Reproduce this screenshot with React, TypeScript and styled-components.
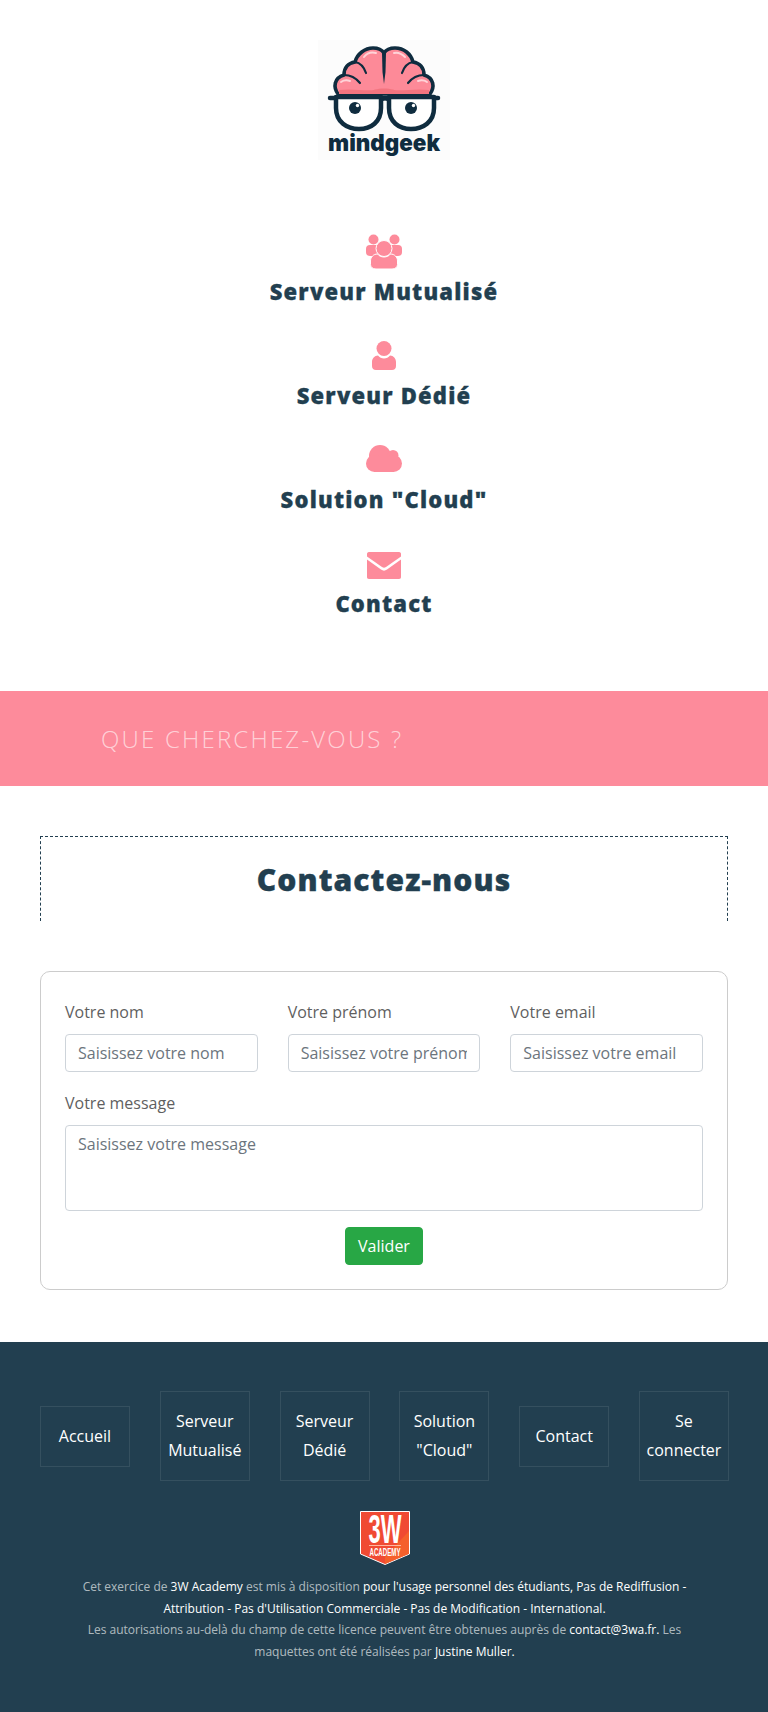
import React from 'react';
import styled, { createGlobalStyle } from 'styled-components';

const GlobalStyle = createGlobalStyle`
  html, body {
    margin: 0;
    padding: 0;
    background: #fff;
    font-family: "Open Sans", "Liberation Sans", sans-serif;
  }
  * {
    box-sizing: border-box;
  }
`;

const Page = styled.div`
  width: 768px;
`;

const Header = styled.header`
  display: flex;
  flex-direction: column;
  align-items: center;
  padding: 40px 0 71px;
`;

const LogoBox = styled.a`
  display: block;
  width: 132px;
  height: 120px;
  background: #fcfcfc;
`;

const LogoSvg = styled.svg`
  display: block;
  width: 132px;
  height: 120px;
`;

const Nav = styled.nav`
  display: flex;
  flex-direction: column;
  align-items: center;
  gap: 28px;
  margin-top: 72px;
`;

const NavItem = styled.a`
  display: flex;
  flex-direction: column;
  align-items: center;
`;

const NavIcon = styled.svg`
  display: block;
  width: 40px;
  height: 40px;
  fill: #fd8b9b;
`;

const NavTitle = styled.span`
  margin-top: 3px;
  font-size: 22px;
  line-height: 33px;
  font-weight: 800;
  letter-spacing: 1.2px;
  -webkit-text-stroke: 0.3px #223f50;
  color: #223f50;
`;

const SearchBand = styled.section`
  display: flex;
  align-items: center;
  height: 95px;
  padding-left: 101px;
  background: #fd8b9b;
`;

const SearchText = styled.span`
  font-size: 24px;
  font-weight: 300;
  letter-spacing: 2.2px;
  text-transform: uppercase;
  color: rgba(255, 255, 255, 0.62);
`;

const Main = styled.main`
  padding: 50px 40px 52px;
`;

const TitleBox = styled.div`
  display: flex;
  justify-content: center;
  align-items: center;
  height: 85px;
  border: 1px dashed #223f50;
  border-bottom: none;
`;

const Title = styled.h1`
  margin: 0;
  font-size: 30px;
  font-weight: 800;
  letter-spacing: 1.1px;
  -webkit-text-stroke: 0.4px #223f50;
  color: #223f50;
`;

const FormCard = styled.form`
  margin-top: 50px;
  padding: 28px 24px 24px;
  border: 1px solid #ccc;
  border-radius: 10px;
`;

const FieldRow = styled.div`
  display: grid;
  grid-template-columns: repeat(3, 1fr);
  gap: 30px;
`;

const Field = styled.label`
  display: block;
  min-width: 0;
`;

const FieldLabel = styled.span`
  display: block;
  margin-bottom: 10px;
  font-size: 16px;
  line-height: 24px;
  color: #5f5f5f;
`;

const TextInput = styled.input`
  display: block;
  width: 100%;
  height: 38px;
  padding: 6px 12px;
  border: 1px solid #ced4da;
  border-radius: 4px;
  background: #fff;
  font-family: inherit;
  font-size: 16px;
  color: #495057;

  &::placeholder {
    color: #6c757d;
    opacity: 1;
  }
`;

const MessageField = styled(Field)`
  margin-top: 19px;
`;

const TextArea = styled.textarea`
  display: block;
  width: 100%;
  height: 86px;
  padding: 6px 12px;
  border: 1px solid #ced4da;
  border-radius: 4px;
  background: #fff;
  font-family: inherit;
  font-size: 16px;
  line-height: 24px;
  resize: none;

  &::placeholder {
    color: #6c757d;
    opacity: 1;
  }
`;

const SubmitRow = styled.div`
  display: flex;
  justify-content: center;
  margin-top: 16px;
`;

const SubmitButton = styled.button`
  height: 38px;
  width: 78px;
  padding: 0;
  border: 1px solid #28a745;
  border-radius: 4px;
  background: #28a745;
  font-family: inherit;
  font-size: 16px;
  color: #fff;
  cursor: pointer;
`;

const Footer = styled.footer`
  height: 370px;
  padding: 49px 39px 0 40px;
  background: #223f50;
`;

const FooterNav = styled.nav`
  display: flex;
  justify-content: space-between;
  align-items: center;
`;

const FooterLink = styled.a`
  display: block;
  width: 90px;
  padding: 15px 6px;
  border: 1px solid #35505f;
  font-size: 16px;
  line-height: 29px;
  text-align: center;
  color: #fff;
`;

const Badge = styled.svg`
  display: block;
  width: 50px;
  height: 54px;
  margin: 30px auto 11px;
`;

const Licence = styled.p`
  margin: 0 auto;
  width: 640px;
  font-size: 12px;
  line-height: 21.7px;
  text-align: center;
  color: rgba(255, 255, 255, 0.65);
`;

const Strong = styled.a`
  color: #fff;
`;

const MindgeekLogo = () => (
  <LogoSvg viewBox="0 0 132 120">
    <path
      d="M20 54C15 47 16 38 26 35C26 28 30 23 37 22C39 14 47 8 55 8C60 8 64 10 66 13C68 10 72 8 77 8C86 8 93 14 95 22C102 23 106 28 106 35C116 38 117 47 112 54Z"
      fill="#fd8a98"
      stroke="#0f2c3f"
      strokeWidth="3.6"
      strokeLinejoin="round"
    />
    <path d="M64 13H68L67.500 32L66 44L64.500 32Z" fill="#0f2c3f" />
    <path
      d="M37 22C43 23 46 27 48 33M95 22C89 23 86 27 84 33M26 35C33 35 38 38 42 43M106 35C99 35 94 38 90 43"
      fill="none"
      stroke="#0f2c3f"
      strokeWidth="2.2"
      strokeLinecap="round"
    />
    <path d="M21 50C36 48 50 52 57 49.500C62 48 70 48 75 49.500C82 52 96 48 111 50V54H21Z" fill="#f3747f" />
    <path d="M46 17C49 13 54 12 58 13M76 13C80 12 84 14 87 17M23 42C26 40 29 40 32 41M100 41C103 40 106 40 109 42" fill="none" stroke="#ffd3d8" strokeWidth="2" strokeLinecap="round" />
    <path d="M12 58H120" stroke="#0f2c3f" strokeWidth="4.500" strokeLinecap="round" />
    <path d="M18 57H63V68C63 82 53 89 41 89C29 89 18 82 18 68Z" fill="#fff" stroke="#0f2c3f" strokeWidth="4.500" strokeLinejoin="round" />
    <path d="M71 57H116V68C116 82 105 89 93 89C81 89 71 82 71 68Z" fill="#fff" stroke="#0f2c3f" strokeWidth="4.500" strokeLinejoin="round" />
    <path d="M63 60C65 58 69 58 71 60" fill="none" stroke="#0f2c3f" strokeWidth="4" />
    <circle cx="37" cy="68" r="6" fill="#0f2c3f" />
    <circle cx="93" cy="68" r="6" fill="#0f2c3f" />
    <circle cx="39.500" cy="65.500" r="1.700" fill="#fff" />
    <circle cx="95.500" cy="65.500" r="1.700" fill="#fff" />
    <text
      x="66"
      y="111"
      textAnchor="middle"
      textLength="112"
      lengthAdjust="spacingAndGlyphs"
      fontFamily="Inter, 'Open Sans', sans-serif"
      fontWeight="900"
      fontSize="23"
      fill="#0f2c3f"
    >
      mindgeek
    </text>
  </LogoSvg>
);

const UsersIcon = () => (
  <NavIcon viewBox="0 0 40 40">
    <circle cx="9.500" cy="7.500" r="5" />
    <circle cx="30.500" cy="7.500" r="5" />
    <rect x="2" y="13" width="14" height="11" rx="4" />
    <rect x="24" y="13" width="14" height="11" rx="4" />
    <circle cx="20" cy="16.500" r="8" stroke="#fff" strokeWidth="1" />
    <path d="M12 37C8.500 37 6.500 35 6.500 32.500V29C6.500 25 9.500 22 13.500 22C15 24 17.500 25 20 25C22.500 25 25 24 26.500 22C30.500 22 33.500 25 33.500 29V32.500C33.500 35 31.500 37 28 37Z" stroke="#fff" strokeWidth="1" />
  </NavIcon>
);

const UserIcon = () => (
  <NavIcon viewBox="0 -1 40 40">
    <circle cx="20" cy="11.500" r="7.500" />
    <path d="M12 33C9.500 33 8 31.500 8 29V25C8 21.500 10.500 18.500 14 18.500C15.500 20.500 17.500 21.500 20 21.500C22.500 21.500 24.500 20.500 26 18.500C29.500 18.500 32 21.500 32 25V29C32 31.500 30.500 33 28 33Z" />
  </NavIcon>
);

const CloudIcon = () => (
  <NavIcon viewBox="0 -2 40 40">
    <circle cx="16" cy="14" r="11" />
    <circle cx="29" cy="13.500" r="5.500" />
    <circle cx="10.500" cy="21.500" r="8.500" />
    <circle cx="29.500" cy="21.500" r="8.500" />
    <rect x="10" y="15" width="20" height="15" />
  </NavIcon>
);

const MailIcon = () => (
  <NavIcon viewBox="0 -3 40 40">
    <path d="M5 5H35C36.500 5 37 6 37 7V9.500L22 20C20.500 21 19.500 21 18 20L3 9.500V7C3 6 3.500 5 5 5Z" />
    <path d="M3 12.500L17 22.500C19 24 21 24 23 22.500L37 12.500V30C37 31 36.500 32 35 32H5C3.500 32 3 31 3 30Z" />
  </NavIcon>
);

const AcademyBadge = () => (
  <Badge viewBox="0 0 50 54">
    <path d="M0.500 0.500H49.500V43L25 53.500L0.500 43Z" fill="#f04a33" stroke="#fff" strokeWidth="1" />
    <path d="M49 20V42.700L25 53V46Z" fill="#f5602b" />
    <text x="25" y="32" textAnchor="middle" textLength="33" lengthAdjust="spacingAndGlyphs" fontFamily="'Liberation Sans', sans-serif" fontWeight="700" fontSize="40" fill="#fff">
      3W
    </text>
    <rect x="9" y="34" width="32" height="1" fill="#ffb7a0" />
    <text x="25" y="44.500" textAnchor="middle" textLength="31" lengthAdjust="spacingAndGlyphs" fontFamily="'Liberation Sans', sans-serif" fontWeight="700" fontSize="11" fill="#fff">
      ACADEMY
    </text>
  </Badge>
);

const navItems = [
  { label: 'Serveur Mutualisé', icon: <UsersIcon /> },
  { label: 'Serveur Dédié', icon: <UserIcon /> },
  { label: 'Solution "Cloud"', icon: <CloudIcon /> },
  { label: 'Contact', icon: <MailIcon /> },
];

const footerLinks = ['Accueil', 'Serveur Mutualisé', 'Serveur Dédié', 'Solution "Cloud"', 'Contact', 'Se connecter'];

const App: React.FC = () => {
  return (
    <Page>
      <GlobalStyle />
      <Header>
        <LogoBox>
          <MindgeekLogo />
        </LogoBox>
        <Nav>
          {navItems.map((item) => (
            <NavItem key={item.label}>
              {item.icon}
              <NavTitle>{item.label}</NavTitle>
            </NavItem>
          ))}
        </Nav>
      </Header>

      <SearchBand>
        <SearchText>Que cherchez-vous ?</SearchText>
      </SearchBand>

      <Main>
        <TitleBox>
          <Title>Contactez-nous</Title>
        </TitleBox>
        <FormCard>
          <FieldRow>
            <Field>
              <FieldLabel>Votre nom</FieldLabel>
              <TextInput placeholder="Saisissez votre nom" />
            </Field>
            <Field>
              <FieldLabel>Votre prénom</FieldLabel>
              <TextInput placeholder="Saisissez votre prénom" />
            </Field>
            <Field>
              <FieldLabel>Votre email</FieldLabel>
              <TextInput placeholder="Saisissez votre email" />
            </Field>
          </FieldRow>
          <MessageField>
            <FieldLabel>Votre message</FieldLabel>
            <TextArea placeholder="Saisissez votre message" />
          </MessageField>
          <SubmitRow>
            <SubmitButton type="button">Valider</SubmitButton>
          </SubmitRow>
        </FormCard>
      </Main>

      <Footer>
        <FooterNav>
          {footerLinks.map((link) => (
            <FooterLink key={link}>{link}</FooterLink>
          ))}
        </FooterNav>
        <AcademyBadge />
        <Licence>
          Cet exercice de <Strong>3W Academy</Strong> est mis à disposition{' '}
          <Strong>pour l'usage personnel des étudiants, Pas de Rediffusion - Attribution - Pas d'Utilisation Commerciale - Pas de Modification - International.</Strong>
          <br />
          Les autorisations au-delà du champ de cette licence peuvent être obtenues auprès de <Strong>contact@3wa.fr.</Strong> Les maquettes ont été réalisées par <Strong>Justine Muller.</Strong>
        </Licence>
      </Footer>
    </Page>
  );
};

export default App;
